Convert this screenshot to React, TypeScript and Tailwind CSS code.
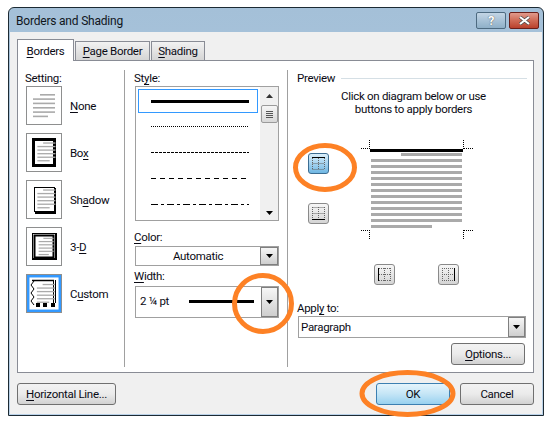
import React from "react";

const font = { fontFamily: 'Roboto, "Noto Sans", sans-serif' };

function U({ children }: { children: React.ReactNode }) {
  return <span className="underline underline-offset-[2px] decoration-[1px]">{children}</span>;
}

function Lines({ x = 7, w = 22 }: { x?: number; w?: number }) {
  const ys = [7, 11.3, 15.6, 20, 24.3, 28.6];
  return (
    <>
      {ys.map((y, i) => {
        const a = i === 0 ? x + 7 : x;
        const b = i === 5 ? x + w - 7 : x + w;
        return <rect key={y} x={a} y={y} width={b - a} height={1.6} fill="#aaaaaa" />;
      })}
    </>
  );
}

function SettingIcon({ kind }: { kind: string }) {
  return (
    <svg width="34" height="37" viewBox="0 0 34 37" className="block">
      {kind === "none" && <Lines x={6} w={22} />}
      {kind === "box" && (
        <>
          <rect x="6.5" y="5.5" width="21" height="26" fill="none" stroke="#000" strokeWidth="3" />
          <g transform="translate(3,1) scale(0.82,0.82) translate(3,2)"><Lines x={6} w={22} /></g>
        </>
      )}
      {kind === "shadow" && (
        <>
          <rect x="7.5" y="6.5" width="20" height="24" fill="none" stroke="#000" strokeWidth="1" />
          <path d="M28 7v25H8" fill="none" stroke="#000" strokeWidth="2" />
          <g transform="translate(3,1) scale(0.82,0.82) translate(3,2)"><Lines x={6} w={22} /></g>
        </>
      )}
      {kind === "3d" && (
        <>
          <rect x="5.5" y="5.5" width="23" height="26" fill="none" stroke="#000" strokeWidth="1" />
          <rect x="7.5" y="7.5" width="19" height="22" fill="none" stroke="#000" strokeWidth="2" />
          <path d="M5 31h24M29 5v27" fill="none" stroke="#000" strokeWidth="2" />
          <g transform="translate(5.5,3) scale(0.68,0.75) translate(3,2)"><Lines x={6} w={22} /></g>
        </>
      )}
      {kind === "custom" && (
        <>
          <rect x="1.2" y="1.2" width="31.6" height="34.6" fill="none" stroke="#3399ff" strokeWidth="2.5" />
          <path d="M5 5.5h22" stroke="#000" strokeWidth="1.5" />
          <path d="M26.5 5v23M28.5 5v23" stroke="#000" strokeWidth="1" />
          <path d="M7 6l-3 4 3 4-3 4 3 4-3 4 3 4" fill="none" stroke="#000" strokeWidth="1" />
          <rect x="9" y="28" width="4" height="4" fill="#000" />
          <rect x="16" y="28" width="4" height="4" fill="#000" />
          <rect x="24" y="28" width="4" height="4" fill="#000" />
          <g transform="translate(2.5,1.5) scale(0.82,0.82) translate(3,2)"><Lines x={6} w={22} /></g>
        </>
      )}
    </svg>
  );
}

function SettingRow({ kind, label }: { kind: string; label: React.ReactNode }) {
  return (
    <div className="flex items-center gap-[8px] h-[39px]">
      <div className="w-[36px] h-[39px] border border-[#8e8f8f] bg-white">
        <SettingIcon kind={kind} />
      </div>
      <span>{label}</span>
    </div>
  );
}

function StyleLine({ dash, h = 1 }: { dash: string; h?: number }) {
  return (
    <svg width="98" height={h} className="block">
      <line x1="0" x2="98" y1={h / 2} y2={h / 2} stroke="#000" strokeWidth={h} strokeDasharray={dash} />
    </svg>
  );
}

function DropArrow() {
  return (
    <svg width="7" height="4" viewBox="0 0 7 4"><path d="M0 0h7L3.5 4z" fill="#000" /></svg>
  );
}

function DropButton({ w, cls }: { w: string; cls: string }) {
  return (
    <div className={`${w} ${cls} flex items-center justify-center border border-[#7f7f7f] bg-gradient-to-b from-[#f6f6f6] to-[#cfcfcf]`}>
      <DropArrow />
    </div>
  );
}

function PushButton({ children, cls }: { children: React.ReactNode; cls: string }) {
  return (
    <div className={`${cls} h-[22px] flex items-center justify-center rounded-[3px] border border-[#707070] bg-gradient-to-b from-[#f2f2f2] via-[#ebebeb] to-[#d2d2d2]`}>
      {children}
    </div>
  );
}

function BorderButton({ side, active }: { side: "top" | "bottom" | "left" | "right"; active?: boolean }) {
  const lines: Record<string, string> = {
    top: "M3 3.5h13",
    bottom: "M3 15.5h13",
    left: "M3.5 3v13",
    right: "M15.5 3v13",
  };
  const dots: Record<string, string> = {
    top: "M3.5 15.5h12M3.5 9.5h12M3.5 4v12M15.5 4v12M9.5 4v12",
    bottom: "M3.5 3.5h12M3.5 9.5h12M3.5 3v12M15.5 3v12M9.5 3v12",
    left: "M4 3.5h12M4 15.5h12M4 9.5h12M15.5 3v13M9.5 3v13",
    right: "M3 3.5h12M3 15.5h12M3 9.5h12M3.5 3v13M9.5 3v13",
  };
  return (
    <div
      className={`w-[21px] h-[21px] rounded-[3px] border ${
        active
          ? "border-[#3c6d92] bg-gradient-to-b from-[#d9eefa] to-[#6fb7e3]"
          : "border-[#8a8a8a] bg-gradient-to-b from-[#f7f7f7] to-[#d4d4d4]"
      }`}
    >
      <svg width="19" height="19" viewBox="0 0 19 19" className="block">
        <path d={dots[side]} fill="none" stroke="#666" strokeWidth="1" strokeDasharray="1 1" />
        <path d={lines[side]} fill="none" stroke="#000" strokeWidth="1" />
      </svg>
    </div>
  );
}

function PreviewPage() {
  const ys = [19, 25, 31, 37, 43, 49, 55, 61, 67, 73, 79];
  const dot = { stroke: "#000", strokeWidth: 1, strokeDasharray: "1 1", fill: "none" };
  return (
    <svg width="112" height="100" viewBox="0 0 112 100" className="block">
      <path d="M8.5 0v9M0 8.5h8" {...dot} />
      <path d="M102.5 0v9M103 8.5h9" {...dot} />
      <path d="M8.5 90v9M0 90.5h8" {...dot} />
      <path d="M102.5 90v9M103 90.5h9" {...dot} />
      <rect x="9" y="9" width="93" height="3" fill="#000" />
      <rect x="40" y="13" width="61" height="3" fill="#aaaaaa" />
      {ys.map((y) => (
        <rect key={y} x="10" y={y} width="91" height="3" fill="#aaaaaa" />
      ))}
      <rect x="10" y="85" width="61" height="3" fill="#aaaaaa" />
    </svg>
  );
}

export default function App() {
  return (
    <div className="relative w-[555px] h-[429px] bg-white pl-[8px] pt-[7px] text-[11.5px] tracking-[-0.3px] leading-[16px] text-[#0a0a14] overflow-hidden" style={font}>
      <div className="w-[536px] h-[409px] flex flex-col rounded-t-[6px] border border-[#1c2a33] bg-gradient-to-b from-[#a4c0d8] to-[#b9d1e8] p-[1px] pt-0">
        {/* Title bar */}
        <div className="h-[24px] shrink-0 flex items-start justify-between pl-[6px] pr-[3px]">
          <span className="mt-[5px] text-[12px] tracking-[-0.2px] text-[#10161c]">Borders and Shading</span>
          <div className="flex gap-[3px] mt-[4px]">
            <div className="w-[30px] h-[17px] rounded-[2px] border border-[#4d6a80] bg-gradient-to-b from-[#c3d5e5] via-[#a8c2d7] to-[#8fb0c8] flex items-center justify-center text-[13px] font-bold text-white leading-none [text-shadow:0_0_1px_#222]">?</div>
            <div className="w-[30px] h-[17px] rounded-[2px] border border-[#6a1f1a] bg-gradient-to-b from-[#e09a8c] via-[#cf6a55] to-[#b9402c] flex items-center justify-center">
              <svg width="13" height="9" viewBox="0 0 13 9"><path d="M2 1l9 7M11 1L2 8" stroke="#444" strokeWidth="3.4" /><path d="M2 1l9 7M11 1L2 8" stroke="#fff" strokeWidth="2.2" /></svg>
            </div>
          </div>
        </div>

        {/* Client */}
        <div className="flex-1 min-h-0 flex flex-col bg-[#f0f0f0] px-[7px] pt-[7px]">
          {/* Tabs */}
          <div className="flex items-end h-[21px] shrink-0 relative z-10">
            <div className="w-[57px] h-[22px] -mb-[1px] border border-b-0 border-[#898c95] bg-white flex items-center justify-center"><span><U>B</U>orders</span></div>
            <div className="ml-[1px] w-[75px] h-[19px] border border-b-0 border-[#898c95] bg-gradient-to-b from-[#f2f2f2] to-[#d5d5d5] flex items-center justify-center"><span><U>P</U>age Border</span></div>
            <div className="ml-[1px] w-[54px] h-[19px] border border-b-0 border-[#898c95] bg-gradient-to-b from-[#f2f2f2] to-[#d5d5d5] flex items-center justify-center"><span><U>S</U>hading</span></div>
          </div>

          {/* Panel */}
          <div className="w-[517px] h-[313px] shrink-0 border border-[#898c95] bg-white flex pt-[9px] pb-[5px]">
            {/* Setting */}
            <div className="w-[107px] shrink-0 border-r border-[#a0a0a0] pl-[7px] flex flex-col">
              <div className="h-[16px]">Setting:</div>
              <div className="flex flex-col gap-[8px] pl-[1px]">
                <SettingRow kind="none" label={<><U>N</U>one</>} />
                <SettingRow kind="box" label={<>Bo<U>x</U></>} />
                <SettingRow kind="shadow" label={<>Sh<U>a</U>dow</>} />
                <SettingRow kind="3d" label={<>3-<U>D</U></>} />
                <SettingRow kind="custom" label={<>C<U>u</U>stom</>} />
              </div>
            </div>

            {/* Style */}
            <div className="w-[163px] shrink-0 border-r border-[#a0a0a0] pl-[10px] flex flex-col">
              <div className="h-[16px] -ml-px">St<U>y</U>le:</div>
              <div className="w-[144px] h-[135px] border border-[#a0a0a0] flex">
                <div className="flex-1 flex flex-col pt-[2px] pl-[2px]">
                  <div className="w-[120px] h-[24px] border border-[#3399ff] flex items-center pl-[12px]"><StyleLine dash="none" h={3} /></div>
                  <div className="h-[16px] mt-[5px] pl-[13px] flex items-center"><StyleLine dash="1 1" /></div>
                  <div className="h-[16px] mt-[10px] pl-[13px] flex items-center"><StyleLine dash="3 1" /></div>
                  <div className="h-[16px] mt-[10px] pl-[13px] flex items-center"><StyleLine dash="5 4" /></div>
                  <div className="h-[16px] mt-[10px] pl-[13px] flex items-center"><StyleLine dash="7 3 3 3" /></div>
                </div>
                <div className="w-[18px] bg-[#f0f0f0] flex flex-col items-center">
                  <div className="h-[18px] flex items-center"><svg width="7" height="4" viewBox="0 0 7 4"><path d="M3.5 0L7 4H0z" fill="#333" /></svg></div>
                  <div className="w-[17px] h-[18px] rounded-[2px] border border-[#9a9a9a] bg-gradient-to-b from-[#f6f6f6] to-[#d8d8d8] flex flex-col gap-[1px] items-center justify-center">
                    <div className="w-[7px] h-px bg-[#555]" /><div className="w-[7px] h-px bg-[#555]" /><div className="w-[7px] h-px bg-[#555]" /><div className="w-[7px] h-px bg-[#555]" />
                  </div>
                  <div className="flex-1" />
                  <div className="h-[14px] flex items-center"><DropArrow /></div>
                </div>
              </div>

              <div className="h-[16px] mt-[8px] -ml-px"><U>C</U>olor:</div>
              <div className="w-[144px] h-[20px] mt-[1px] border border-[#a0a0a0] flex">
                <div className="flex-1 flex items-center justify-center">Automatic</div>
                <DropButton w="w-[18px]" cls="h-[18px]" />
              </div>

              <div className="h-[16px] mt-[2px] mb-[1px] -ml-px"><U>W</U>idth:</div>
              <div className="w-[144px] h-[32px] mt-[1px] border border-[#a0a0a0] flex">
                <div className="flex-1 flex items-center pl-[4px] pb-[2px]">
                  <span className="w-[49px]">2 ¼ pt</span>
                  <div className="w-[65px] h-[3px] bg-black" />
                </div>
                <DropButton w="w-[17px]" cls="h-[30px]" />
              </div>
            </div>

            {/* Preview */}
            <div className="flex-1 pl-[10px] pr-[6px] flex flex-col">
              <div className="flex items-center gap-[6px] h-[16px] -ml-px">
                <span>Preview</span>
                <div className="flex-1 h-px bg-[#d5dfe5]" />
              </div>
              <div className="text-center mt-[4px] pl-[2px] leading-[13px]">Click on diagram below or use<br />buttons to apply borders</div>
              <div className="flex mt-[24px] h-[170px]">
                <div className="w-[63px] pl-[10px] flex flex-col gap-[29px] pt-[13px]">
                  <BorderButton side="top" active />
                  <BorderButton side="bottom" />
                </div>
                <div className="flex flex-col">
                  <PreviewPage />
                  <div className="flex mt-[24px] pl-[13px] gap-[43px]">
                    <BorderButton side="left" />
                    <BorderButton side="right" />
                  </div>
                </div>
              </div>
              <div className="h-[16px] -mt-[10px] -ml-px">Appl<U>y</U> to:</div>
              <div className="w-[228px] h-[22px] border border-[#a0a0a0] flex">
                <div className="flex-1 flex items-center pl-[2px]">Paragraph</div>
                <DropButton w="w-[17px]" cls="h-[20px]" />
              </div>
              <div className="flex justify-start mt-[5px] pl-[153px]">
                <PushButton cls="w-[74px]"><span><U>O</U>ptions...</span></PushButton>
              </div>
            </div>
          </div>

          {/* Footer */}
          <div className="flex items-start justify-between mt-[10px]">
            <PushButton cls="w-[99px]"><span><U>H</U>orizontal Line...</span></PushButton>
            <div className="flex gap-[10px] mr-[1px]">
              <div className="w-[74px] h-[22px] flex items-center justify-center rounded-[3px] border border-[#3c7fb1] bg-gradient-to-b from-[#e5f4fc] via-[#c4e5f6] to-[#98d1ef]">OK</div>
              <PushButton cls="w-[74px]">Cancel</PushButton>
            </div>
          </div>
        </div>
      </div>

      {/* Hand-drawn annotation circles */}
      <svg width="555" height="429" className="absolute inset-0 pointer-events-none">
        <g fill="none" stroke="#fd8125" strokeWidth="5">
          <ellipse cx="325" cy="167.5" rx="29.5" ry="22" />
          <ellipse cx="263" cy="303.5" rx="28.5" ry="28" />
          <ellipse cx="407.5" cy="393.5" rx="45.5" ry="21" />
        </g>
      </svg>
    </div>
  );
}
